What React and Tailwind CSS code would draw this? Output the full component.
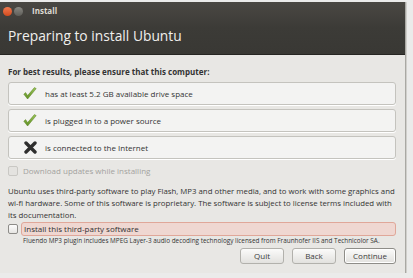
import React from 'react'

function Check() {
  return (
    <svg width="14" height="13" viewBox="0 0 14 13">
      <defs>
        <linearGradient id="g" x1="0" y1="0" x2="0" y2="1">
          <stop offset="0" stopColor="#9cc65a" />
          <stop offset="1" stopColor="#5f8f22" />
        </linearGradient>
      </defs>
      <path d="M0.8 7.2 L4.6 12 L13.2 1.6 L11.4 0.6 L4.6 8.6 L2.6 5.6 Z" fill="url(#g)" stroke="#577f1e" strokeWidth="0.5" strokeLinejoin="round" />
    </svg>
  )
}

function Cross() {
  return (
    <svg width="13" height="13" viewBox="0 0 13 13">
      <path d="M2 2 L11 11 M11 2 L2 11" stroke="#2e2e2e" strokeWidth="3.4" strokeLinecap="round" />
    </svg>
  )
}

function Row({ icon, children }) {
  return (
    <div className="flex items-center gap-[8px] h-[23px] pl-[14px] rounded-[3px] border border-[#c4c3be] bg-[#f3f3f2] shadow-[0_1px_0_#fff]">
      <div className="w-[14px] flex justify-center">{icon}</div>
      <span className="text-[8px] text-[#333]">{children}</span>
    </div>
  )
}

function Btn({ children, active }) {
  return (
    <button
      className={
        'h-[16px] flex items-center justify-center leading-none rounded-[3px] border text-[8px] text-[#3c3c3c] bg-gradient-to-b from-[#fbfbfa] to-[#e2e1de] ' +
        (active ? 'w-[52px] border-[#8e8d88] shadow-[inset_0_0_0_1px_#fff]' : 'w-[44px] border-[#b2b1ac]')
      }
    >
      {children}
    </button>
  )
}

export default function App() {
  return (
    <div className="w-[413px] h-[278px] bg-[#ebebea] pt-[2px]" style={{ fontFamily: '"Open Sans", "Noto Sans", sans-serif' }}>
      <div className="w-[406px] h-[271px] flex flex-col bg-[#e8e7e4] border-r border-[#a9a8a3] shadow-[1px_0_0_#d0cfcb]">
        {/* Title + header */}
        <div className="h-[53px] bg-gradient-to-b from-[#4a4843] via-[#3c3b37] to-[#393834] border-b border-[#262522] flex flex-col">
          <div className="h-[18px] flex items-center pl-[3px] gap-[2px]">
            <div className="w-[9px] h-[9px] rounded-full bg-gradient-to-b from-[#f27a4e] to-[#d14a1c]" />
            <div className="w-[9px] h-[9px] rounded-full bg-gradient-to-b from-[#8a8983] to-[#5e5d58]" />
            <span className="ml-[7px] text-[8px] font-bold text-[#dfdbd2]">Install</span>
          </div>
          <div className="pl-[8px] pt-[9px] text-[13.8px] leading-none text-[#f0efec]">Preparing to install Ubuntu</div>
        </div>

        {/* Body */}
        <div className="flex-1 flex flex-col px-[8px] pt-[12px]">
          <div className="text-[8px] font-bold text-[#333] leading-[10px]">For best results, please ensure that this computer:</div>
          <div className="flex flex-col gap-[4px] mt-[5px] pr-[1px]">
            <Row icon={<Check />}>has at least 5.2 GB available drive space</Row>
            <Row icon={<Check />}>is plugged in to a power source</Row>
            <Row icon={<Cross />}>is connected to the Internet</Row>
          </div>
          <div className="flex items-center gap-[5px] mt-[6px] h-[12px]">
            <div className="w-[10px] h-[10px] rounded-[2px] border border-[#c9c8c4] bg-[#e4e3e0]" />
            <span className="text-[8px] text-[#a3a29e]">Download updates while installing</span>
          </div>
          <p className="mt-[8px] text-[7.8px] leading-[12px] text-[#333]">
            Ubuntu uses third-party software to play Flash, MP3 and other media, and to work with some graphics and wi-fi hardware. Some of this software is proprietary. The software is subject to license terms included with its documentation.
          </p>
          <div className="flex items-center gap-[3px] mt-[1px]">
            <div className="w-[10px] h-[10px] rounded-[2px] border border-[#8d8c88] bg-gradient-to-b from-[#fdfdfd] to-[#e6e5e2]" />
            <div className="flex-1 h-[14px] flex items-center pl-[2px] rounded-[3px] border border-[#e0a799] bg-[#efd7d1] mr-[1px]">
              <span className="text-[8px] text-[#333]">Install this third-party software</span>
            </div>
          </div>
          <div className="pl-[15px] text-[6.4px] text-[#333] leading-[9px] whitespace-nowrap">
            Fluendo MP3 plugin includes MPEG Layer-3 audio decoding technology licensed from Fraunhofer IIS and Technicolor SA.
          </div>
          <div className="flex justify-end gap-[8px] mt-[3px] pr-[1px]">
            <Btn>Quit</Btn>
            <Btn>Back</Btn>
            <Btn active>Continue</Btn>
          </div>
        </div>
      </div>
    </div>
  )
}
